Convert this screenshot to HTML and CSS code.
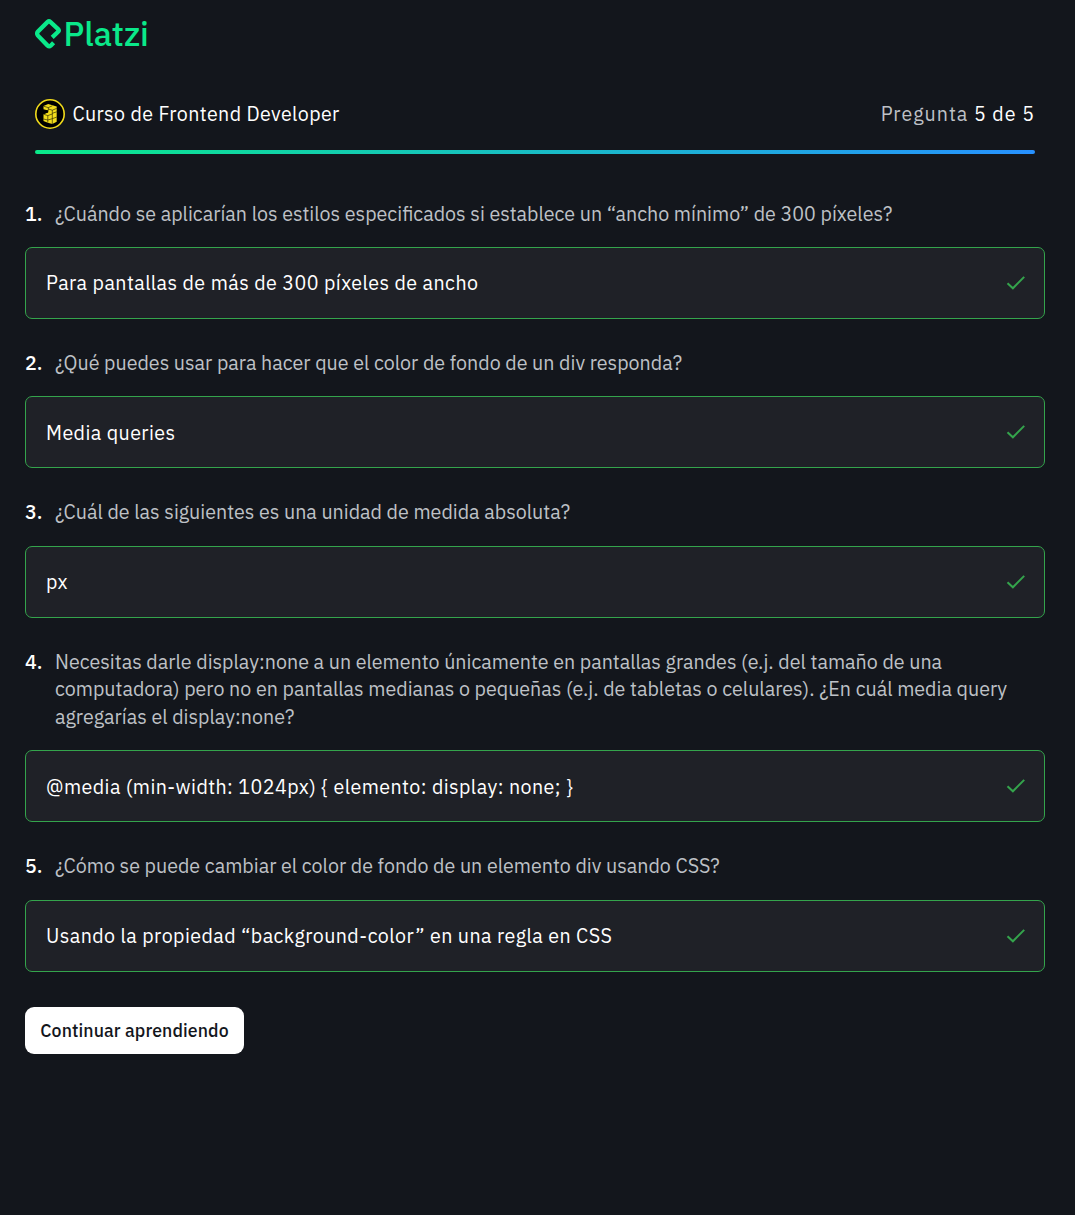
FILE: index.html
```
<!DOCTYPE html>
<html lang="es">
<head>
<meta charset="utf-8">
<title>Curso de Frontend Developer</title>
<link rel="stylesheet" href="styles.css">
</head>
<body>
<svg class="symbols" width="0" height="0"><symbol id="check" viewBox="0 0 20 16"><path d="M1.5 8.2 6.9 13.3 18.2 1.9" fill="none" stroke="currentColor" stroke-width="2"/></symbol></svg>
<header class="header">
  <div class="logo">
    <svg class="logo-mark" width="27" height="30" viewBox="0 0 27 30"><path d="M17.2 18.4 23.1 12.7q1.3-1.3 0-2.6L15.3 2.9q-1.3-1.2-2.7 0L3 12.4q-1.7 2 0 4.3l9.6 9.9q1.6 1.4 3.1.1l2.9-3" fill="none" stroke="#0ae98a" stroke-width="4.3"/></svg>
    <span class="logo-name">Platzi</span>
  </div>
  <div class="course">
    <svg class="badge" width="30" height="30" viewBox="0 0 30 30"><circle cx="15" cy="15" r="14.2" fill="#000" stroke="#f2dc1b" stroke-width="1.6"/><path d="m8.5 7 4.7-2 8.5 2.6v15.2l-4.4 2.2-4.5-1.3-4.3-1.7v-6.8l4.8-1.9V11.5l-4.8-1.3z" fill="#f2dc1b"/><path d="M8 11.4h5v2l-4.5 1.7z"/><path d="m8.5 7.2 4.8 1.4v3m0-3 4-1.8M13.3 10l4 1.2 4.4-1.8m-4.4 1.8V25M8.5 15.2l4.3 1.4 4.5-1.6m-4.5 1.6v7M8.5 20l4.3 1 4.5-1.3 4.4-1.6m-4.4-3.8 4.4-1.5" fill="none" stroke="#141100" stroke-width=".6"/></svg>
    <h1 class="course-name">Curso de Frontend Developer</h1>
    <p class="counter">Pregunta <strong class="counter-value">5 de 5</strong></p>
  </div>
  <div class="progress"></div>
</header>
<main class="quiz">
  <section class="item">
    <div class="question"><span class="number">1.</span><p class="text">¿Cuándo se aplicarían los estilos especificados si establece un “ancho mínimo” de 300 píxeles?</p></div>
    <div class="answer"><span>Para pantallas de más de 300 píxeles de ancho</span><svg class="check"><use href="#check"/></svg></div>
  </section>
  <section class="item">
    <div class="question"><span class="number">2.</span><p class="text">¿Qué puedes usar para hacer que el color de fondo de un div responda?</p></div>
    <div class="answer"><span>Media queries</span><svg class="check"><use href="#check"/></svg></div>
  </section>
  <section class="item">
    <div class="question"><span class="number">3.</span><p class="text">¿Cuál de las siguientes es una unidad de medida absoluta?</p></div>
    <div class="answer"><span>px</span><svg class="check"><use href="#check"/></svg></div>
  </section>
  <section class="item">
    <div class="question"><span class="number">4.</span><p class="text">Necesitas darle display:none a un elemento únicamente en pantallas grandes (e.j. del tamaño de una<br>computadora) pero no en pantallas medianas o pequeñas (e.j. de tabletas o celulares). ¿En cuál media query<br>agregarías el display:none?</p></div>
    <div class="answer"><span>@media (min-width: 1024px) { elemento: display: none; }</span><svg class="check"><use href="#check"/></svg></div>
  </section>
  <section class="item">
    <div class="question"><span class="number">5.</span><p class="text">¿Cómo se puede cambiar el color de fondo de un elemento div usando CSS?</p></div>
    <div class="answer"><span>Usando la propiedad “background-color” en una regla en CSS</span><svg class="check"><use href="#check"/></svg></div>
  </section>
  <button class="continue">Continuar aprendiendo</button>
</main>
</body>
</html>
```
FILE: styles.css
```
* { box-sizing: border-box; margin: 0; padding: 0; }
body {
  min-height: 1215px;
  background: #13161c;
  color: #fff;
  font: 19.67px/27.5px "IBM Plex Sans", "Noto Sans", sans-serif;
}
.symbols { display: block; }
.header { padding: 19px 40px 0 35px; }
.logo { display: flex; height: 30px; color: #0ae98a; }
.logo-mark { flex: none; }
.logo-name { margin-left: 1.6px; font-size: 33.3px; line-height: 30px; font-weight: 500; letter-spacing: -.1px; }
.course { display: flex; align-items: center; height: 30px; margin-top: 50px; }
.course-name { margin-left: 7.4px; font-size: 19.65px; font-weight: 400; letter-spacing: .38px; }
.counter { margin-left: auto; color: #bec1c6; letter-spacing: 1px; }
.counter-value { color: #fff; font-weight: 400; }
.progress { height: 4px; margin-top: 21px; border-radius: 2px; background: linear-gradient(90deg, #0ae98a, #2791ff); }
.quiz { padding: 45.5px 30px 0 25px; }
.item { margin-bottom: 29.95px; }
.question { display: flex; margin-bottom: 20px; }
.number { width: 30px; flex: none; font-weight: 500; }
.text { color: #bec1c6; white-space: nowrap; }
.answer {
  display: flex;
  align-items: center;
  justify-content: space-between;
  height: 72px;
  padding: 0 18px 0 20px;
  border: 1px solid #34a44c;
  border-radius: 7px;
  background: #1f2127;
  letter-spacing: .42px;
}
.check { width: 20px; height: 16px; color: #34a44c; }
.continue {
  display: block;
  width: 219px;
  height: 47px;
  margin-top: 35px;
  border: 0;
  border-radius: 9px;
  background: #fff;
  color: #13161c;
  font: 500 17.7px "IBM Plex Sans", "Noto Sans", sans-serif;
  letter-spacing: .1px;
}
```
